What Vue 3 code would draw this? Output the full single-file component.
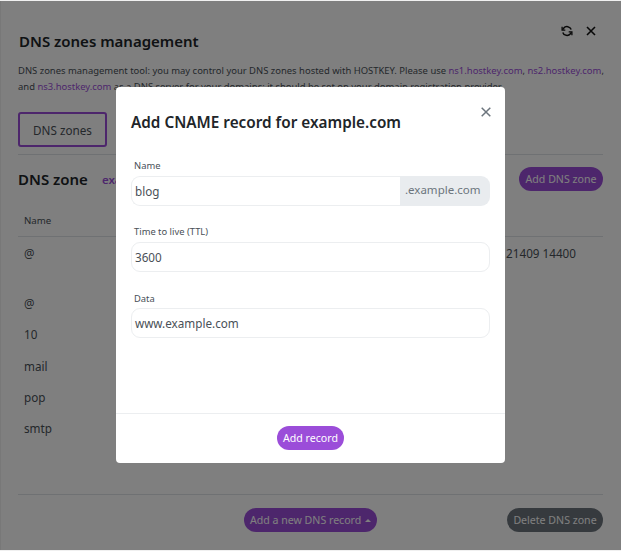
<script setup>
const rows = [
  { name: '@', cls: 'tall', extra: '21409 14400' },
  { name: '@', cls: 'r1' },
  { name: '10', cls: 'r' },
  { name: 'mail', cls: 'r' },
  { name: 'pop', cls: 'r' },
  { name: 'smtp', cls: 'r' },
]
</script>

<template>
  <div class="page">
    <div class="panel">
      <div class="tools">
        <svg width="12" height="12" viewBox="0 0 12 12" fill="none" stroke="#111" stroke-width="1.5">
          <path d="M10.2 4.6A4.4 4.4 0 0 0 2.6 3.2L1.6 4.6" />
          <path d="M1.8 7.4a4.4 4.4 0 0 0 7.6 1.4l1-1.4" />
          <path d="M1.1 1.8v3.4h3.2M10.9 10.2V6.8H7.7" stroke-width="1.3" />
        </svg>
        <svg width="12" height="12" viewBox="0 0 12 12" fill="none" stroke="#111" stroke-width="1.6">
          <path d="M2 2l8 8M10 2l-8 8" />
        </svg>
      </div>
      <h1 class="title">DNS zones management</h1>
      <p class="intro">
        DNS zones management tool: you may control your DNS zones hosted with HOSTKEY. Please use
        <a>ns1.hostkey.com</a>, <a>ns2.hostkey.com</a>,<br />
        and <a>ns3.hostkey.com</a> as a DNS server for your domains; it should be set on your domain registration provider.
      </p>
      <div class="tabs"><button class="tab">DNS zones</button></div>
      <div class="zone-head">
        <h2>DNS zone</h2>
        <a class="zone-name">example.com</a>
        <button class="pill add-zone">Add DNS zone</button>
      </div>
      <div class="thead">Name</div>
      <div v-for="(row, i) in rows" :key="i" class="row" :class="row.cls">
        <span>{{ row.name }}</span>
        <span v-if="row.extra">{{ row.extra }}</span>
      </div>
      <div class="spacer"></div>
      <div class="foot">
        <button class="pill add-record">Add a new DNS record <i class="caret"></i></button>
        <button class="pill del">Delete DNS zone</button>
      </div>
    </div>

    <div class="backdrop">
      <div class="modal">
        <div class="m-head">
          <h3>Add CNAME record for example.com</h3>
          <svg class="m-close" width="10" height="10" viewBox="0 0 10 10" fill="none" stroke="#6c757d" stroke-width="1.5">
            <path d="M.7.7l8.6 8.6M9.3.7L.7 9.3" />
          </svg>
        </div>
        <div class="m-body">
          <label class="first">Name</label>
          <div class="group">
            <div class="input joined">blog</div>
            <div class="suffix">.example.com</div>
          </div>
          <label class="second">Time to live (TTL)</label>
          <div class="input">3600</div>
          <label class="third">Data</label>
          <div class="input">www.example.com</div>
        </div>
        <div class="m-foot"><button class="pill submit">Add record</button></div>
      </div>
    </div>
  </div>
</template>

<style>
html, body { margin: 0; background: #f0f0f0; }
</style>

<style scoped>
* { box-sizing: border-box; }
.page {
  position: relative;
  width: 621px;
  height: 551px;
  overflow: hidden;
  font-family: "Noto Sans", "Open Sans", sans-serif;
  color: #212529;
  background: #f0f0f0;
}
.panel {
  position: relative;
  margin: 1px 0 0 1px;
  height: 549px;
  padding: 24px 18px 0 17px;
  background: #fff;
  display: flex;
  flex-direction: column;
}
.tools {
  position: absolute;
  top: 24px;
  right: 24px;
  display: flex;
  gap: 12px;
}
.title { margin: 6px 0 0 1px; font-size: 15px; line-height: 20px; font-weight: 600; color: #212529; }
.intro { margin: 12px 0 0; font-size: 9.45px; line-height: 15.5px; color: #495057; white-space: nowrap; }
a { color: #9b4dd9; }
.tabs { margin-top: 18px; padding-bottom: 7px; border-bottom: 1px solid #dee2e6; }
.tab {
  display: block;
  width: 89px;
  height: 35px;
  border: 2px solid #9b4dd9;
  border-radius: 3px;
  background: #fff;
  font: 11.7px "Noto Sans", sans-serif;
  color: #495057;
  padding: 0;
}
.zone-head { display: flex; align-items: center; height: 24px; margin-top: 12px; }
.zone-head h2 { margin: 0; font-size: 15px; font-weight: 600; color: #212529; }
.zone-name { margin-left: 14px; font-size: 11.5px; font-weight: 600; }
.pill {
  border: 0;
  border-radius: 13px;
  height: 24px;
  padding: 0;
  font: 10.6px "Noto Sans", sans-serif;
  color: #fff;
  background: #9b4dd9;
}
.add-zone { margin-left: auto; width: 84px; }
.thead {
  margin-top: 20px;
  height: 26px;
  padding: 0 6px;
  font-size: 9.7px;
  line-height: 20px;
  color: #495057;
  border-bottom: 1px solid #dee2e6;
}
.row { display: flex; justify-content: space-between; padding: 0 6px; font-size: 11.7px; line-height: 18px; color: #495057; }
.row.tall { margin-top: 7px; padding-right: 0; }
.row.tall span:last-child { margin-right: 27px; }
.row.r1 { margin-top: 32px; }
.row.r { margin-top: 13.3px; }
.spacer { flex: 1; }
.foot {
  position: relative;
  display: flex;
  justify-content: flex-end;
  height: 56px;
  padding-top: 13px;
  border-top: 1px solid #dee2e6;
}
.add-record { position: absolute; left: 226px; top: 13px; width: 133px; }
.caret {
  display: inline-block;
  margin-left: 1px;
  vertical-align: 2px;
  border: 3px solid transparent;
  border-top: 0;
  border-bottom-color: #fff;
}
.del { width: 96px; background: #6c757d; }
.backdrop {
  position: absolute;
  inset: 1px 0 1px 0;
  background: rgba(0, 0, 0, 0.5);
}
.modal {
  position: absolute;
  left: 116px;
  top: 86px;
  width: 389px;
  height: 376px;
  background: #fff;
  border-radius: 4px;
  display: flex;
  flex-direction: column;
}
.m-head { position: relative; padding: 25px 15px 0; height: 68px; }
.m-head h3 { margin: 0; font-size: 15.3px; line-height: 20px; font-weight: 600; color: #212529; }
.m-close { position: absolute; right: 14px; top: 20px; }
.m-body { flex: 1; padding: 0 15px; }
label { display: block; font-size: 9.4px; line-height: 13px; color: #495057; margin-left: 3px; }
.first { margin-top: 4px; margin-bottom: 4px; }
.second { margin-top: 19px; margin-bottom: 4px; }
.third { margin-top: 20px; margin-bottom: 3px; }
.group { display: flex; }
.input {
  height: 30px;
  width: 100%;
  border: 1px solid #eceef0;
  border-radius: 9px;
  padding: 0 3px;
  font-size: 11.7px;
  line-height: 28px;
  color: #495057;
}
.input.joined { flex: 1; width: auto; border-right: 0; border-radius: 9px 0 0 9px; }
.suffix {
  width: 90px;
  height: 30px;
  background: #e9ecef;
  border-radius: 0 9px 9px 0;
  padding-left: 5px;
  font-size: 11.5px;
  line-height: 28px;
  color: #6c757d;
}
.m-foot {
  height: 50px;
  border-top: 1px solid #eceef0;
  display: flex;
  justify-content: center;
  padding-top: 12px;
}
.submit { width: 67px; }
</style>
